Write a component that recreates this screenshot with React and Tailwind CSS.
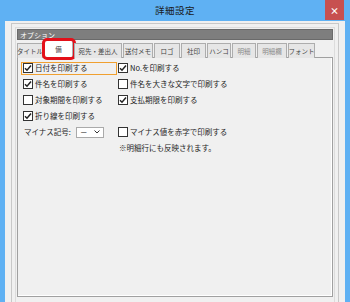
import React from 'react'

const TABS = [
  { label: 'タイトル', w: 'w-[26px]' },
  { label: '備', w: 'w-[29px]', active: true },
  { label: '宛先・差出人', w: 'w-[48px]' },
  { label: '送付メモ', w: 'w-[30px]' },
  { label: 'ロゴ', w: 'w-[26px]' },
  { label: '社印', w: 'w-[25px]' },
  { label: 'ハンコ', w: 'w-[24px]' },
  { label: '明細', w: 'w-[24px]', dim: true },
  { label: '明細欄', w: 'w-[30px]', dim: true },
  { label: 'フォント', w: 'w-[27px]' },
]

function Check({ checked }) {
  return (
    <span className="w-[10px] h-[10px] border border-[#333] bg-white flex items-center justify-center shrink-0">
      {checked && (
        <svg width="8" height="8" viewBox="0 0 8 8">
          <path d="M1 4.2 L3 6.2 L7 1.5" fill="none" stroke="#222" strokeWidth="1.5" />
        </svg>
      )}
    </span>
  )
}

function Row({ checked, label, focus }) {
  return (
    <div className="h-[16px] flex items-center">
      <div
        className={`flex items-center gap-[2px] h-[13px] pl-[1px] ${
          focus ? 'border border-[#f0a030] w-[96px] -ml-px' : ''
        }`}
      >
        <Check checked={checked} />
        <span>{label}</span>
      </div>
    </div>
  )
}

export default function App() {
  return (
    <div
      className="w-[350px] h-[302px] bg-[#5fb1f3] flex flex-col overflow-hidden text-[#1e1e1e]"
      style={{ fontFamily: '"Noto Sans CJK JP", "Noto Sans", sans-serif' }}
    >
      {/* Title bar */}
      <div className="h-[21px] relative flex items-center justify-center shrink-0">
        <span className="text-[9.5px] text-[#1a1a1a] tracking-[0.5px]">詳細設定</span>
        <div className="absolute right-[6px] top-0 w-[19px] h-[20px] bg-[#c75050] flex items-center justify-center text-white text-[9px] font-bold leading-none">
          ×
        </div>
      </div>

      {/* Body */}
      <div className="flex-1 mx-[5px] bg-[#f0f0f0] pt-[2px] px-[6px]">
        <div className="h-full border-l border-t border-r border-[#c8c8c8] pt-[3px] px-[3px]">
          <div className="h-full border-l border-t border-r border-[#dcdcdc] bg-[#f0f0f0] px-px pt-px">
            {/* Header */}
            <div className="h-[11px] bg-[#7e7e7e] text-white text-[7px] leading-[10px] pl-[2px] border border-[#6a6a6a]">
              オプション
            </div>

            {/* Tabs */}
            <div className="flex items-end h-[17px] mt-px relative z-10">
              {TABS.map((t) => (
                <div
                  key={t.label}
                  className={`${t.w} shrink-0 flex items-center justify-center text-[6.5px] leading-none whitespace-nowrap relative ${
                    t.active
                      ? 'h-[18px] bg-white border border-b-0 border-[#adadad] mr-px'
                      : 'h-[15px] mr-px bg-[#e6e6e6] border border-[#adadad] border-b-0'
                  } ${t.dim ? 'text-[#8a8a8a]' : 'text-[#444]'}`}
                >
                  {t.label}
                  {t.active && (
                    <span className="absolute -left-[3px] -top-[3px] w-[34px] h-[22px] border-[3px] border-[#e3101a] rounded-[5px]" />
                  )}
                </div>
              ))}
            </div>

            {/* Panel */}
            <div className="h-[240px] -mt-px border border-[#a0a0a0] shadow-[inset_-1px_-1px_0_#fff] bg-[#f0f0f0] pt-[2px] pl-[4px] text-[7.5px] leading-none">
              <div className="grid grid-cols-[95px_1fr]">
                <Row checked label="日付を印刷する" focus />
                <Row checked label="No.を印刷する" />
                <Row checked label="件名を印刷する" />
                <Row label="件名を大きな文字で印刷する" />
                <Row label="対象期間を印刷する" />
                <Row checked label="支払期限を印刷する" />
                <Row checked label="折り線を印刷する" />
                <div />
                <div className="h-[16px] flex items-center pl-[2px] gap-[5px]">
                  <span>マイナス記号:</span>
                  <div className="w-[28px] h-[11px] bg-white border border-[#aaa] flex items-center justify-between px-[3px]">
                    <span>－</span>
                    <svg width="6" height="4" viewBox="0 0 6 4">
                      <path d="M0.5 0.5 L3 3 L5.5 0.5" fill="none" stroke="#333" strokeWidth="1" />
                    </svg>
                  </div>
                </div>
                <Row label="マイナス値を赤字で印刷する" />
                <div />
                <div className="h-[16px] flex items-center pl-[2px]">※明細行にも反映されます。</div>
              </div>
            </div>
          </div>
        </div>
      </div>
    </div>
  )
}
